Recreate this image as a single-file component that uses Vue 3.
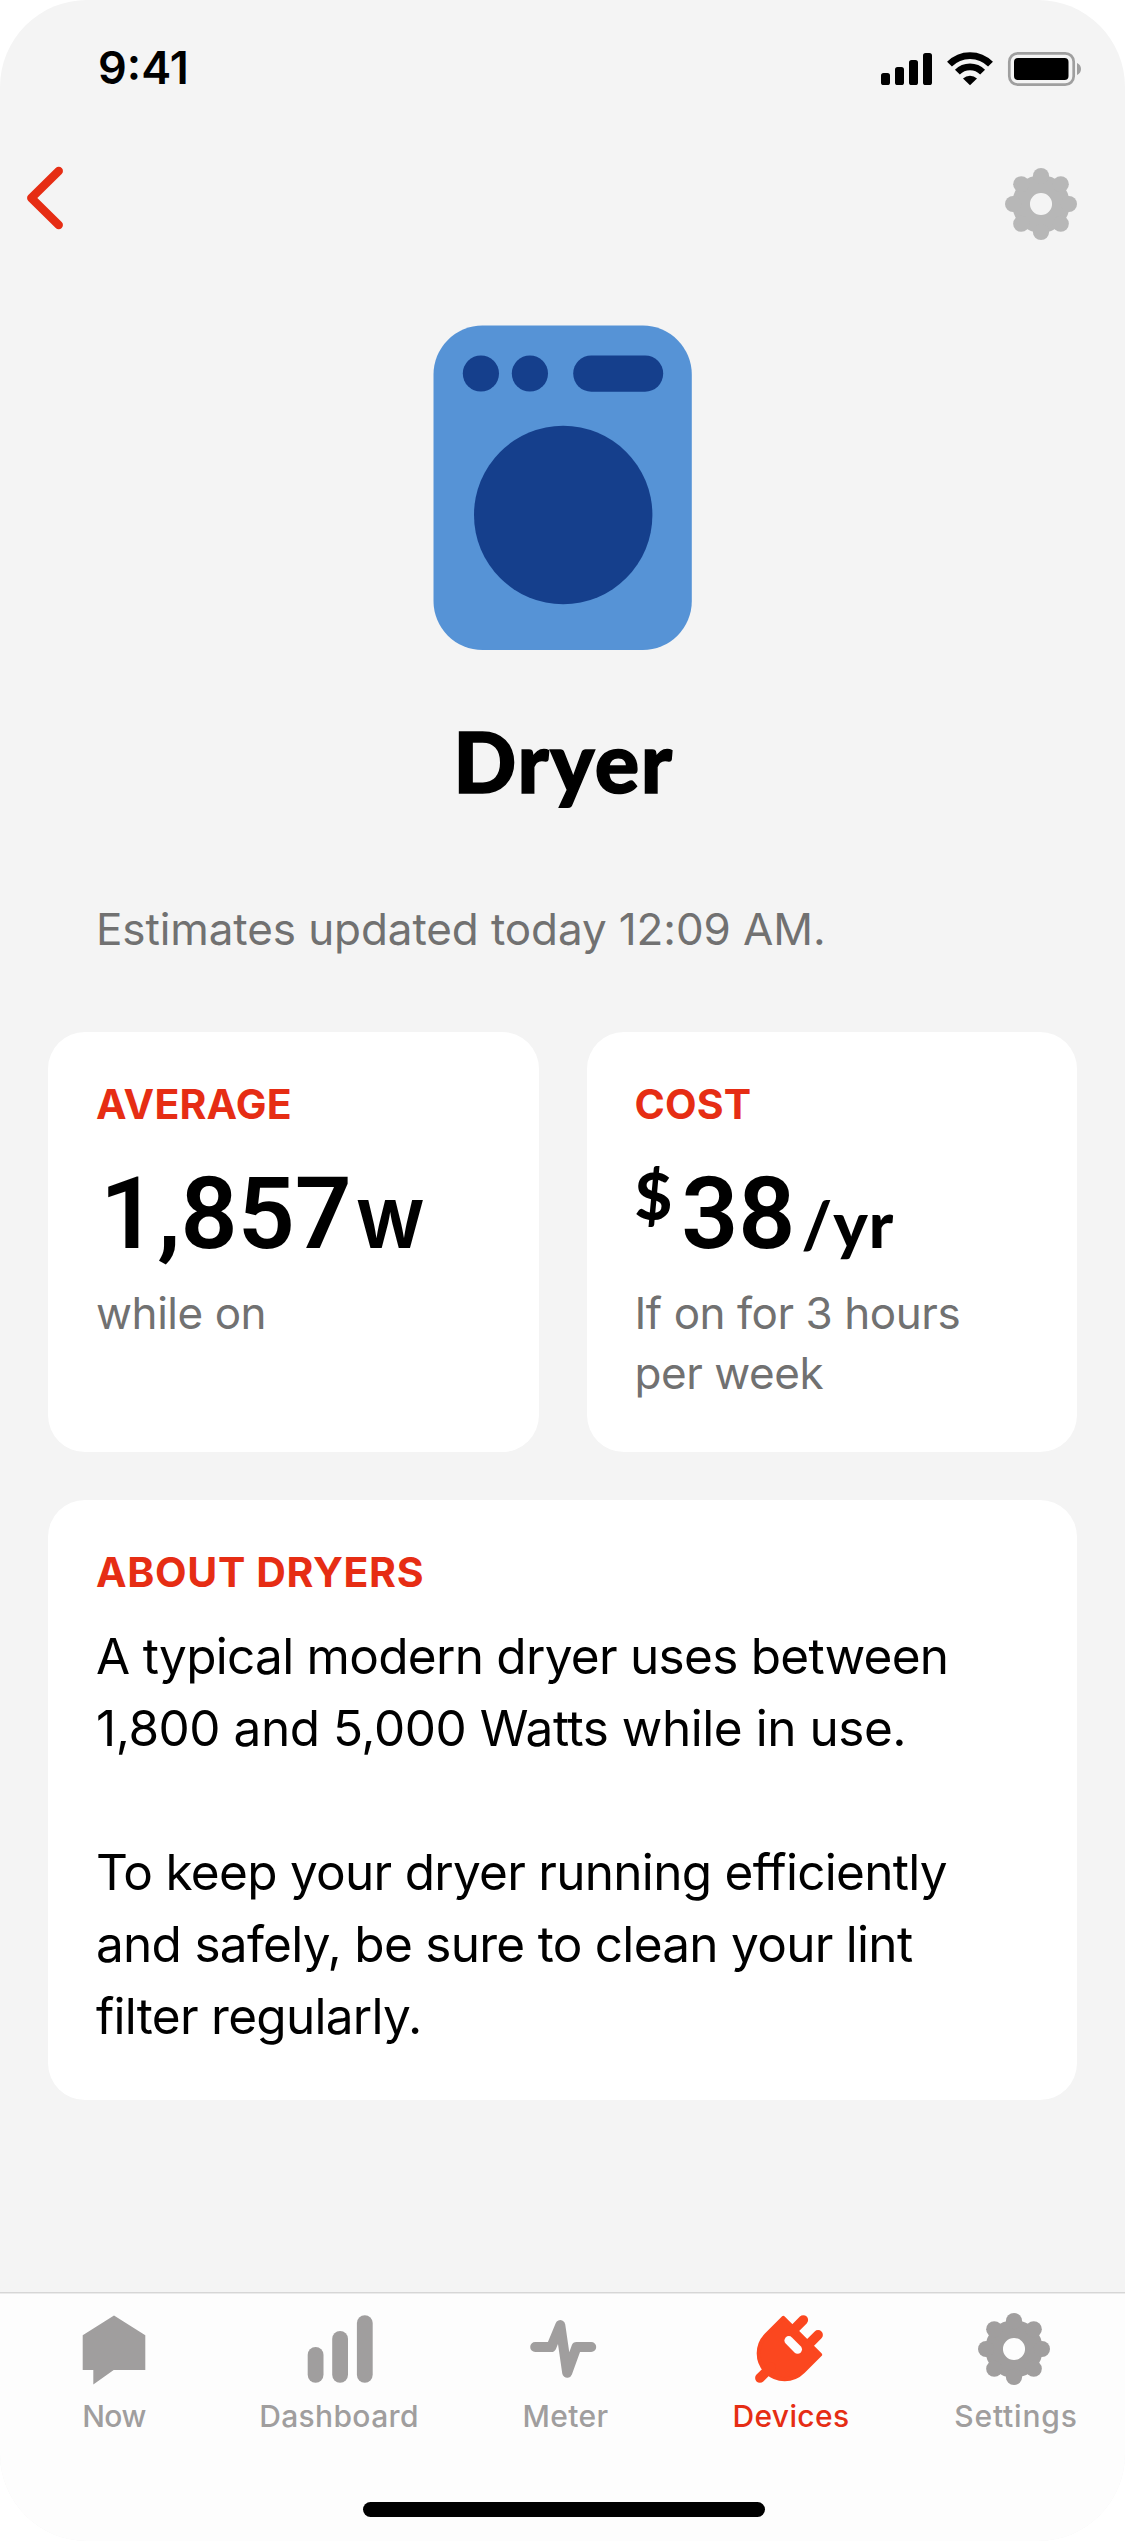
<script setup>
import { ref } from 'vue'

const activeTab = ref('devices')

const stats = [
  { id: 'average', label: 'AVERAGE', prefix: null, value: '1,857', unit: 'W', caption: ['while on'] },
  { id: 'cost', label: 'COST', prefix: '$', value: '38', unit: '/yr', caption: ['If on for 3 hours', 'per week'] },
]

const about = [
  ['A typical modern dryer uses between', '1,800 and 5,000 Watts while in use.'],
  ['To keep your dryer running efficiently', 'and safely, be sure to clean your lint', 'filter regularly.'],
]

const tabs = [
  { id: 'now', label: 'Now' },
  { id: 'dashboard', label: 'Dashboard' },
  { id: 'meter', label: 'Meter' },
  { id: 'devices', label: 'Devices' },
  { id: 'settings', label: 'Settings' },
]

// Eight lobes spaced evenly around the gear body
const gearLobes = Array.from({ length: 8 }, (_, i) => {
  const a = (i * Math.PI) / 4
  return { x: (36 + 27.9 * Math.cos(a)).toFixed(2), y: (36 + 27.9 * Math.sin(a)).toFixed(2) }
})
</script>

<template>
  <div class="screen">
    <header class="status">
      <span class="status__time">9:41</span>
      <svg width="200" height="38" viewBox="0 0 200 38">
        <!-- Signal -->
        <rect x="0" y="24" width="9" height="12" rx="2.6" />
        <rect x="14" y="18" width="9" height="18" rx="2.6" />
        <rect x="28" y="11" width="9" height="25" rx="2.6" />
        <rect x="42" y="4" width="9" height="32" rx="2.6" />
        <!-- Wifi -->
        <g fill="none" stroke="#000" stroke-width="6.8">
          <path d="M68.5 15.2A28.6 28.6 0 0 1 109.5 15.2" />
          <path d="M76.4 23.2A17.6 17.6 0 0 1 101.6 23.2" />
        </g>
        <path d="M82 29.5A10.5 10.5 0 0 1 96 29.5L89 36.2Z" />
        <!-- Battery -->
        <rect x="128.3" y="4.3" width="64.4" height="31.4" rx="8.5" fill="none" stroke="#9f9f9f" stroke-width="2.7" />
        <rect x="133" y="9" width="54.5" height="22" rx="4" />
        <path d="M196 14C198.4 15 200 17.3 200 20S198.4 25 196 26Z" fill="#9f9f9f" />
      </svg>
    </header>

    <nav class="nav">
      <button class="nav__btn" aria-label="Back">
        <svg width="38" height="64" viewBox="0 0 38 64">
          <path d="M33.7 4.9L6.3 32L33.7 59.1" fill="none" stroke="#e62d14" stroke-width="8.5" stroke-linecap="round" stroke-linejoin="round" />
        </svg>
      </button>
      <button class="nav__btn nav__btn--gear" aria-label="Device settings">
        <svg width="72" height="72" viewBox="0 0 72 72" fill="#b7b7b7">
          <circle cx="36" cy="36" r="19.9" fill="none" stroke="#b7b7b7" stroke-width="17.7" />
          <circle v-for="(l, i) in gearLobes" :key="i" :cx="l.x" :cy="l.y" r="8.1" />
        </svg>
      </button>
    </nav>

    <main class="content">
      <svg class="device" width="259" height="325" viewBox="0 0 259 325">
        <rect x="0.5" y="0.6" width="258.3" height="324.4" rx="49" fill="#5693d6" />
        <g fill="#153f8c">
          <circle cx="47.9" cy="48.5" r="18.1" />
          <circle cx="96.9" cy="48.5" r="18.1" />
          <rect x="140.2" y="30.4" width="90" height="36.3" rx="18.1" />
          <circle cx="130.2" cy="190" r="89.2" />
        </g>
      </svg>
      <h1 class="title">Dryer</h1>
      <p class="updated">Estimates updated today 12:09 AM.</p>

      <div class="stats">
        <section v-for="s in stats" :key="s.id" class="card stat">
          <h2 class="card__label">{{ s.label }}</h2>
          <div class="stat__value" :class="`stat__value--${s.id}`">
            <span v-if="s.prefix" class="stat__prefix">{{ s.prefix }}</span>
            <span class="stat__number">{{ s.value }}</span>
            <span class="stat__unit">{{ s.unit }}</span>
          </div>
          <p class="stat__caption">
            <template v-for="(line, i) in s.caption" :key="i"><br v-if="i">{{ line }}</template>
          </p>
        </section>
      </div>

      <section class="card about">
        <h2 class="card__label card__label--wide">ABOUT DRYERS</h2>
        <p v-for="(lines, p) in about" :key="p" class="about__text">
          <span v-for="line in lines" :key="line" class="about__line" :class="{ 'about__line--figures': /\d/.test(line) }">{{ line }}</span>
        </p>
      </section>
    </main>

    <footer class="tabbar">
      <div class="tabs">
        <button
          v-for="t in tabs"
          :key="t.id"
          class="tab"
          :class="[`tab--${t.id}`, { 'tab--active': activeTab === t.id }]"
          @click="activeTab = t.id"
        >
          <svg class="tab__icon" width="72" height="72" viewBox="0 0 72 72">
            <path v-if="t.id === 'now'" d="M4.7 22.3L36 2.5L67.3 22.3V57H35.7L15.3 71.5V57H4.7Z" />
            <g v-else-if="t.id === 'dashboard'">
              <rect x="4.7" y="34" width="15.8" height="35.7" rx="7.9" />
              <rect x="29.2" y="18" width="15.8" height="51.7" rx="7.9" />
              <rect x="53.9" y="2.2" width="15.8" height="67.5" rx="7.9" />
            </g>
            <path
              v-else-if="t.id === 'meter'"
              class="tab__line"
              d="M7.2 34H23.3L32.3 12.1L39.2 59.7L48.5 34H63.2"
            />
            <g v-else-if="t.id === 'devices'">
              <path d="M30.3 4.9L67.1 41.7L50.1 58.7A26 26 0 0 1 13.3 21.9Z" class="tab__body" />
              <path d="M50.3 7L38 19.3M65.1 21.9L53 34M6.9 65L18 54" class="tab__prong" />
              <path d="M35.8 27.5L44.6 36.3" class="tab__slot" />
            </g>
            <g v-else>
              <circle cx="36" cy="36" r="19.9" class="tab__ring" />
              <circle v-for="(l, i) in gearLobes" :key="i" :cx="l.x" :cy="l.y" r="8.1" />
            </g>
          </svg>
          <span class="tab__label">{{ t.label }}</span>
        </button>
      </div>
      <div class="home-indicator" />
    </footer>
  </div>
</template>

<style>
body {
  margin: 0;
  background: #fff;
}
</style>

<style scoped>
.screen {
  display: flex;
  flex-direction: column;
  width: 1125px;
  height: 2541px;
  border-radius: 87px;
  overflow: hidden;
  background: #f4f4f4;
  color: #000;
  font-family: Inter, 'Noto Sans', sans-serif;
}

h1, h2, p { margin: 0; }

button {
  padding: 0;
  border: 0;
  background: none;
  font: inherit;
}

svg { display: block; }

/* Status bar */
.status {
  display: flex;
  align-items: center;
  justify-content: space-between;
  height: 136px;
  padding: 0 44px 0 98px;
}
.status__time {
  font-size: 45px;
  font-weight: 600;
  line-height: 52px;
}

/* Back and gear buttons */
.nav {
  display: flex;
  align-items: center;
  justify-content: space-between;
  height: 124px;
  padding: 0 48px 0 25px;
}
.nav__btn--gear { margin-top: 12px; }

.content {
  display: flex;
  flex-direction: column;
  flex: 1;
  padding: 65px 48px 0;
}
.device {
  align-self: center;
  flex-shrink: 0;
}

.title {
  margin-top: 63px;
  padding-left: 2px;
  font-family: Lato, sans-serif;
  font-size: 83px;
  font-weight: 900;
  line-height: 96px;
  letter-spacing: 1.6px;
  text-align: center;
  -webkit-text-stroke: 1.5px #000;
}

.updated {
  margin-top: 90px;
  padding-left: 48px;
  color: #717171;
  font-size: 44px;
  line-height: 60px;
  letter-spacing: -0.1px;
}

/* Cards */
.card {
  box-sizing: border-box;
  padding: 46px 0 0 48px;
  border-radius: 37px;
  background: #fff;
}
.card__label {
  color: #e62d14;
  font-size: 41px;
  font-weight: 700;
  line-height: 52px;
  letter-spacing: 0.2px;
}
.card__label--wide { letter-spacing: 0.65px; }

.stats {
  display: grid;
  grid-template-columns: 1fr 1fr;
  gap: 48px;
  margin-top: 73px;
}
.stat { height: 420px; }

.stat__value {
  display: flex;
  align-items: baseline;
  height: 120px;
  margin-top: 24px;
}
.stat__number {
  font-family: Roboto, sans-serif;
  font-size: 100px;
  font-weight: 600;
  line-height: 120px;
}
.stat__unit, .stat__prefix {
  font-family: Lato, sans-serif;
  font-size: 65px;
  font-weight: 900;
  line-height: 64px;
}
.stat__prefix {
  align-self: flex-start;
  margin-top: 9px;
  margin-right: 9px;
}
.stat__value--average .stat__number { margin-left: 4px; }
.stat__value--average .stat__unit {
  margin-left: 4px;
  font-family: Inter, sans-serif;
  font-size: 66px;
  font-weight: 700;
}
.stat__value--cost .stat__unit {
  margin-left: 6px;
  letter-spacing: 1px;
}

.stat__caption {
  margin-top: 9px;
  color: #717171;
  font-size: 44px;
  line-height: 60px;
  letter-spacing: -0.45px;
}

.about {
  height: 600px;
  margin-top: 48px;
}
.about__text {
  margin-top: 22px;
  font-size: 49.5px;
  line-height: 72px;
  letter-spacing: -0.72px;
}
.about__text + .about__text { margin-top: 72px; }
.about__line {
  display: block;
  white-space: nowrap;
}
.about__line--figures { letter-spacing: -0.45px; }

/* Tab bar */
.tabbar {
  box-sizing: border-box;
  height: 249px;
  padding-top: 20px;
  border-top: 1px solid #d6d6d6;
  background: #fdfdfd;
  box-shadow: inset 0 1px #ebebeb;
}
.tabs {
  display: flex;
  padding-left: 1.5px;
}
.tab {
  display: flex;
  flex-direction: column;
  align-items: center;
  flex: 0 0 225px;
  color: #a09e9e;
}
.tab__icon {
  fill: #a09e9e;
  stroke: none;
}
.tab__line {
  fill: none;
  stroke: #a09e9e;
  stroke-width: 10;
  stroke-linecap: round;
  stroke-linejoin: round;
}
.tab__ring {
  fill: none;
  stroke: #a09e9e;
  stroke-width: 17.7;
}
.tab__body {
  fill: #fb471f;
  stroke: #fb471f;
  stroke-width: 4;
  stroke-linejoin: round;
}
.tab__prong {
  fill: none;
  stroke: #fb471f;
  stroke-width: 9.6;
  stroke-linecap: round;
}
.tab__slot {
  stroke: #fdfdfd;
  stroke-width: 8.8;
  stroke-linecap: round;
}
.tab__label {
  margin: 13px 0 0 2px;
  font-size: 30px;
  font-weight: 500;
  line-height: 36px;
  letter-spacing: 0.35px;
}
.tab--now .tab__label {
  margin-left: 0;
  letter-spacing: -0.5px;
}
.tab--dashboard .tab__label { margin-left: 0; }
.tab--meter .tab__label { margin-left: 3px; }
.tab--devices .tab__label { margin-left: 4px; }
.tab--settings .tab__label {
  margin-left: 4px;
  letter-spacing: 0.8px;
}
.tab--active { color: #e62d14; }

.home-indicator {
  width: 402px;
  height: 15px;
  margin: 68px 0 0 363px;
  border-radius: 8px;
  background: #000;
}
</style>
